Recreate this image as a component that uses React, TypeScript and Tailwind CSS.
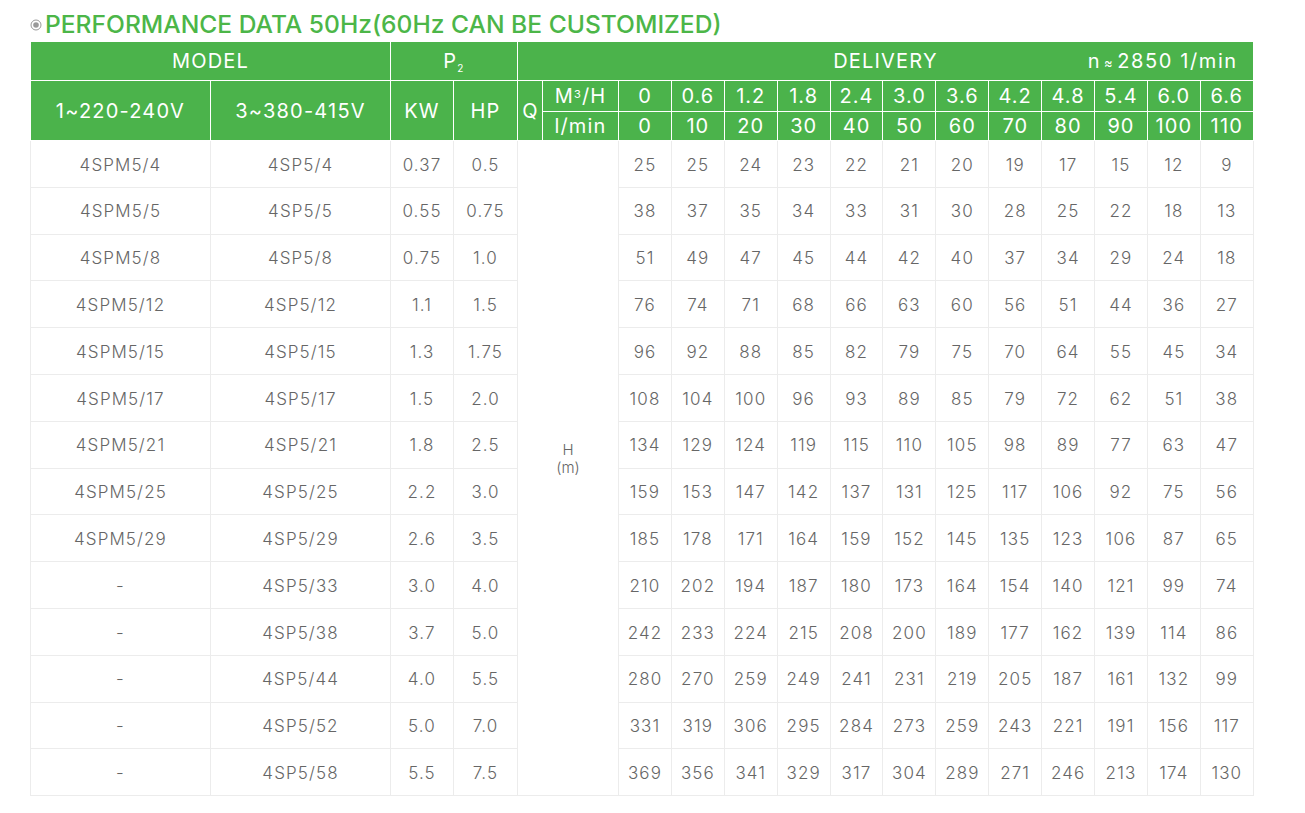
import React from 'react';

const flowM3 = ['0', '0.6', '1.2', '1.8', '2.4', '3.0', '3.6', '4.2', '4.8', '5.4', '6.0', '6.6'];
const flowL = ['0', '10', '20', '30', '40', '50', '60', '70', '80', '90', '100', '110'];

const rows: { m1: string; m3: string; kw: string; hp: string; h: number[] }[] = [
  { m1: '4SPM5/4', m3: '4SP5/4', kw: '0.37', hp: '0.5', h: [25, 25, 24, 23, 22, 21, 20, 19, 17, 15, 12, 9] },
  { m1: '4SPM5/5', m3: '4SP5/5', kw: '0.55', hp: '0.75', h: [38, 37, 35, 34, 33, 31, 30, 28, 25, 22, 18, 13] },
  { m1: '4SPM5/8', m3: '4SP5/8', kw: '0.75', hp: '1.0', h: [51, 49, 47, 45, 44, 42, 40, 37, 34, 29, 24, 18] },
  { m1: '4SPM5/12', m3: '4SP5/12', kw: '1.1', hp: '1.5', h: [76, 74, 71, 68, 66, 63, 60, 56, 51, 44, 36, 27] },
  { m1: '4SPM5/15', m3: '4SP5/15', kw: '1.3', hp: '1.75', h: [96, 92, 88, 85, 82, 79, 75, 70, 64, 55, 45, 34] },
  { m1: '4SPM5/17', m3: '4SP5/17', kw: '1.5', hp: '2.0', h: [108, 104, 100, 96, 93, 89, 85, 79, 72, 62, 51, 38] },
  { m1: '4SPM5/21', m3: '4SP5/21', kw: '1.8', hp: '2.5', h: [134, 129, 124, 119, 115, 110, 105, 98, 89, 77, 63, 47] },
  { m1: '4SPM5/25', m3: '4SP5/25', kw: '2.2', hp: '3.0', h: [159, 153, 147, 142, 137, 131, 125, 117, 106, 92, 75, 56] },
  { m1: '4SPM5/29', m3: '4SP5/29', kw: '2.6', hp: '3.5', h: [185, 178, 171, 164, 159, 152, 145, 135, 123, 106, 87, 65] },
  { m1: '-', m3: '4SP5/33', kw: '3.0', hp: '4.0', h: [210, 202, 194, 187, 180, 173, 164, 154, 140, 121, 99, 74] },
  { m1: '-', m3: '4SP5/38', kw: '3.7', hp: '5.0', h: [242, 233, 224, 215, 208, 200, 189, 177, 162, 139, 114, 86] },
  { m1: '-', m3: '4SP5/44', kw: '4.0', hp: '5.5', h: [280, 270, 259, 249, 241, 231, 219, 205, 187, 161, 132, 99] },
  { m1: '-', m3: '4SP5/52', kw: '5.0', hp: '7.0', h: [331, 319, 306, 295, 284, 273, 259, 243, 221, 191, 156, 117] },
  { m1: '-', m3: '4SP5/58', kw: '5.5', hp: '7.5', h: [369, 356, 341, 329, 317, 304, 289, 271, 246, 213, 174, 130] },
];

const th = 'border border-white bg-[#4bb34b] text-white font-normal text-center p-0 leading-none text-[20px] tracking-[1.2px]';
const td = 'border border-[#ececec] text-center p-0 pt-[3px] h-[46.8px]';

export default function App() {
  return (
    <div
      className="w-[1305px] h-[813px] bg-white pl-[30px] pt-[10px]"
      style={{ fontFamily: 'Inter, "Noto Sans", sans-serif' }}
    >
      <div className="flex items-center gap-[3px] h-[28px]">
        <svg width="12" height="12" viewBox="0 0 12 12" className="mt-[2px]">
          <circle cx="6" cy="6" r="5" fill="none" stroke="#999" strokeWidth="1" />
          <circle cx="6" cy="6" r="2.8" fill="#999" />
        </svg>
        <h1 className="text-[24.6px] leading-none font-medium text-[#4cb648]">
          PERFORMANCE DATA 50Hz(60Hz CAN BE CUSTOMIZED)
        </h1>
      </div>

      <table className="mt-[3px] border-collapse table-fixed w-[1223px]">
        <colgroup>
          <col className="w-[180px]" />
          <col className="w-[180px]" />
          <col className="w-[63px]" />
          <col className="w-[64px]" />
          <col className="w-[25px]" />
          <col className="w-[76px]" />
          {flowM3.map((_, i) => (
            <col key={i} className="w-[52.9px]" />
          ))}
        </colgroup>
        <thead>
          <tr className="h-[39px]">
            <th colSpan={2} className={th}>MODEL</th>
            <th colSpan={2} className={th}>
              P<sub className="text-[10px] align-baseline relative top-[4px]">2</sub>
            </th>
            <th colSpan={14} className={`${th} relative`}>
              DELIVERY
              <span className="absolute right-[15px] top-1/2 -translate-y-1/2 tracking-[1.6px]">
                n<span className="text-[13px] mx-[3px]">≈</span>2850 1/min
              </span>
            </th>
          </tr>
          <tr className="h-[31px]">
            <th rowSpan={2} className={`${th} font-medium`}>1~220-240V</th>
            <th rowSpan={2} className={`${th} font-medium`}>3~380-415V</th>
            <th rowSpan={2} className={th}>KW</th>
            <th rowSpan={2} className={th}>HP</th>
            <th rowSpan={2} className={`${th} tracking-normal`}>Q</th>
            <th className={th}>
              M<sup className="text-[11px] relative -top-[5px] align-baseline">3</sup>/H
            </th>
            {flowM3.map((v) => (
              <th key={v} className={`${th} tracking-[1px]`}>{v}</th>
            ))}
          </tr>
          <tr className="h-[29px]">
            <th className={th}>l/min</th>
            {flowL.map((v) => (
              <th key={v} className={`${th} ${v === '100' || v === '110' ? 'tracking-[0.5px]' : 'tracking-[1px]'}`}>{v}</th>
            ))}
          </tr>
        </thead>
        <tbody className="text-[17px] text-[#666] font-light tracking-[1.1px]">
          {rows.map((r, i) => (
            <tr key={i}>
              <td className={td}>{r.m1}</td>
              <td className={td}>{r.m3}</td>
              <td className={td}>{r.kw}</td>
              <td className={td}>{r.hp}</td>
              {i === 0 && (
                <td rowSpan={rows.length} colSpan={2} className="border border-[#ececec] text-center p-0 text-[15px] leading-[18px] tracking-normal">
                  <div className="-mt-[18px]">
                    H
                    <br />
                    (m)
                  </div>
                </td>
              )}
              {r.h.map((v, j) => (
                <td key={j} className={td}>{v}</td>
              ))}
            </tr>
          ))}
        </tbody>
      </table>
    </div>
  );
}
